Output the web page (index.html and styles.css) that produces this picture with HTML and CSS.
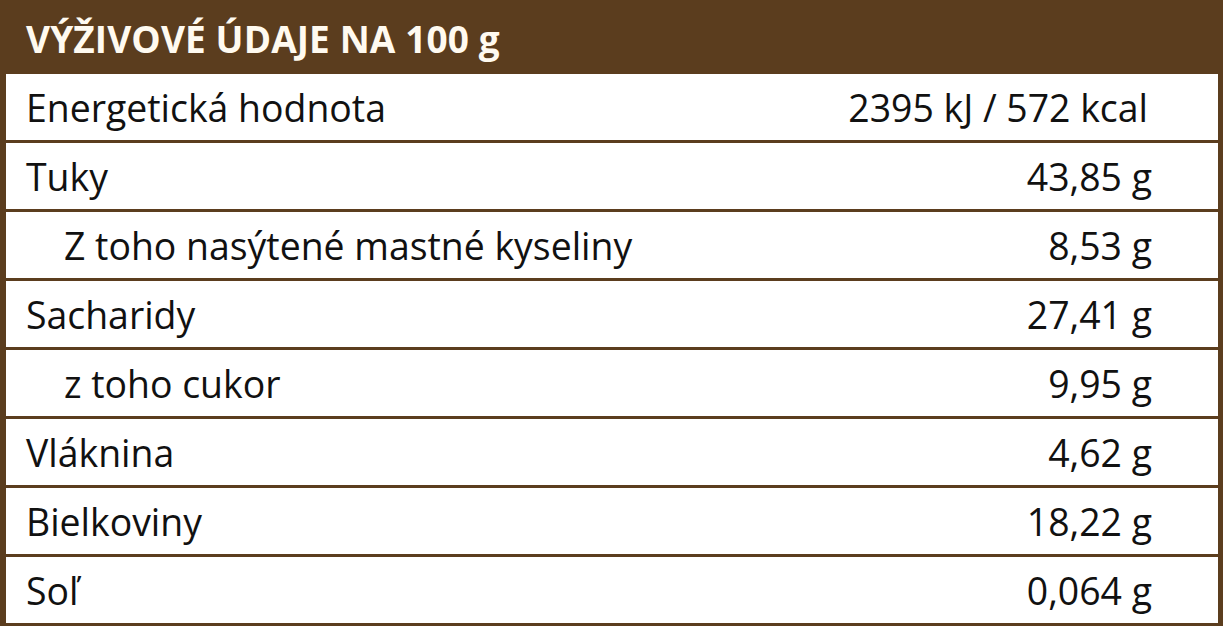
FILE: index.html
```html
<!DOCTYPE html>
<html lang="sk">
<head>
<meta charset="utf-8">
<title>Výživové údaje</title>
<link rel="stylesheet" href="styles.css">
</head>
<body>
<div class="panel">
  <div class="head">VÝŽIVOVÉ ÚDAJE NA 100 g</div>
  <div class="row"><span class="name">Energetická hodnota</span><span class="val val-energy">2395 kJ / 572 kcal</span></div>
  <div class="row"><span class="name">Tuky</span><span class="val">43,85 g</span></div>
  <div class="row sub"><span class="name">Z toho nasýtené mastné kyseliny</span><span class="val">8,53 g</span></div>
  <div class="row"><span class="name">Sacharidy</span><span class="val">27,41 g</span></div>
  <div class="row sub"><span class="name">z toho cukor</span><span class="val">9,95 g</span></div>
  <div class="row"><span class="name">Vláknina</span><span class="val">4,62 g</span></div>
  <div class="row"><span class="name">Bielkoviny</span><span class="val">18,22 g</span></div>
  <div class="row last"><span class="name">Soľ</span><span class="val">0,064 g</span></div>
</div>
</body>
</html>
```
FILE: styles.css
```css
html, body {
  margin: 0;
  padding: 0;
  background: #ffffff;
}
body {
  font-family: "Open Sans", "Liberation Sans", sans-serif;
  color: #111111;
}
.panel {
  width: 1223px;
  box-sizing: border-box;
  border-left: 6px solid #5b3d1e;
  border-right: 5px solid #5b3d1e;
  border-bottom: 3px solid #5b3d1e;
  background: #ffffff;
}
.head {
  background: #5b3d1e;
  color: #fffaf0;
  font-weight: 700;
  font-size: 37px;
  height: 74px;
  line-height: 78px;
  margin-left: -6px;
  margin-right: -5px;
  padding-left: 26px;
  letter-spacing: 0.1px;
}
.row {
  display: flex;
  justify-content: space-between;
  align-items: center;
  height: 66px;
  border-bottom: 3px solid #5b3d1e;
  padding-left: 20px;
  padding-right: 66px;
  font-size: 37.4px;
}
.row.last {
  border-bottom: none;
}
.row.sub {
  padding-left: 58px;
}
.val-energy {
  margin-right: 4px;
}
```
